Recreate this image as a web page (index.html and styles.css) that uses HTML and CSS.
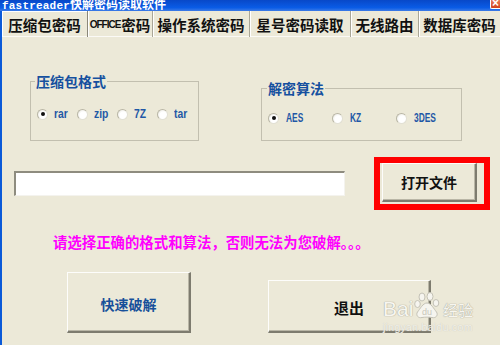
FILE: index.html
```html
<!DOCTYPE html>
<html lang="zh-CN">
<head>
<meta charset="utf-8">
<title>fastreader快解密码读取软件</title>
<link rel="stylesheet" href="styles.css">
</head>
<body>
<div class="window">
  <div class="titlebar">
    <span class="title"><span class="latin-title">fastreader</span>快解密码读取软件</span>
    <span class="close">×</span>
  </div>
  <div class="tabs">
    <div class="tab t1 active">压缩包密码</div>
    <div class="tab t2"><span class="office">OFFICE</span>密码</div>
    <div class="tab t3">操作系统密码</div>
    <div class="tab t4">星号密码读取</div>
    <div class="tab t5">无线路由</div>
    <div class="tab t6">数据库密码</div>
  </div>
  <div class="panel">
    <div class="groups">
      <fieldset class="group g1">
        <legend>压缩包格式</legend>
        <div class="radios">
          <label class="radio"><span class="circle checked"></span><span class="lbl">rar</span></label>
          <label class="radio"><span class="circle"></span><span class="lbl">zip</span></label>
          <label class="radio"><span class="circle"></span><span class="lbl">7Z</span></label>
          <label class="radio"><span class="circle"></span><span class="lbl">tar</span></label>
        </div>
      </fieldset>
      <fieldset class="group g2">
        <legend>解密算法</legend>
        <div class="radios">
          <label class="radio"><span class="circle checked"></span><span class="lbl">AES</span></label>
          <label class="radio"><span class="circle"></span><span class="lbl">KZ</span></label>
          <label class="radio"><span class="circle"></span><span class="lbl">3DES</span></label>
        </div>
      </fieldset>
    </div>
    <div class="filerow">
      <div class="filebox"></div>
      <div class="highlight"><button class="btn open">打开文件</button></div>
    </div>
    <p class="msg">请选择正确的格式和算法，否则无法为您破解。。。</p>
    <div class="actions">
      <button class="btn crack">快速破解</button>
      <button class="btn exit">退出</button>
    </div>
  </div>
  <div class="watermark">
    <div class="wm-line">
      <span class="wm-bai">Bai</span>
      <svg class="paw" width="26" height="27" viewBox="0 0 26 27">
        <g fill="#f6f5ef" stroke="#c4c2b6" stroke-width="1">
          <ellipse cx="8" cy="5" rx="3" ry="4"/>
          <ellipse cx="16" cy="4.5" rx="3" ry="4"/>
          <ellipse cx="3.5" cy="12" rx="2.8" ry="3.5"/>
          <ellipse cx="22" cy="11" rx="2.8" ry="3.5"/>
          <path d="M13 11 C9 11 6 17 3.5 20 C1.5 23 4 26.5 8 25.5 C10.5 25 15.5 25 18 25.5 C22 26.5 24.5 23 22.5 20 C20 17 17 11 13 11 Z"/>
        </g>
        <text x="13" y="23" text-anchor="middle" class="paw-du">du</text>
      </svg>
      <span class="wm-jy">经验</span>
    </div>
    <div class="wm-url">jingyan.baidu.com</div>
  </div>
</div>
</body>
</html>
```

FILE: styles.css
```css
* { box-sizing: border-box; }
html, body {
  margin: 0;
  padding: 0;
  width: 500px;
  height: 345px;
  overflow: hidden;
  background: #ece9d8;
}
body {
  font-family: "Noto Sans CJK SC", "Liberation Sans", sans-serif;
}
.window {
  position: relative;
  width: 500px;
  height: 345px;
  border-left: 2px solid #0b5ad8;
  background: #ece9d8;
}
.titlebar {
  display: flex;
  align-items: flex-start;
  height: 11px;
  margin-left: -2px;
  background: linear-gradient(#0848c8, #0a5ce6 70%, #3d7be6);
  overflow: hidden;
}
.title {
  display: block;
  margin-top: -3px;
  padding-left: 2px;
  color: #fff;
  font-weight: 700;
  font-size: 12px;
  line-height: 13px;
  white-space: nowrap;
}
.latin-title {
  font-family: "Liberation Mono", "DejaVu Sans Mono", monospace;
  font-size: 11px;
  letter-spacing: 0.2px;
}
.close {
  margin-left: auto;
  width: 10px;
  height: 9px;
  background: linear-gradient(#e97b5a, #d2401c);
  border: 1px solid #fff;
  border-right: 0;
  border-top: 0;
  border-radius: 0 0 0 2px;
  color: #fff;
  font-family: "Liberation Sans", sans-serif;
  font-weight: 700;
  font-size: 12px;
  line-height: 7px;
  padding-left: 1px;
  overflow: hidden;
}
.tabs {
  display: flex;
  height: 26px;
  border-bottom: 1px solid #fbfaf6;
}
.tab {
  display: flex;
  align-items: center;
  justify-content: center;
  height: 26px;
  font-size: 14.5px;
  font-weight: 700;
  color: #111;
  white-space: nowrap;
  border-right: 1px solid #a9a697;
  box-shadow: inset 1px 0 0 #fff;
  padding-top: 1px;
}
.tab.active {
  box-shadow: inset 1px 1px 0 #fff;
  border-right: 1px solid #8a8779;
}
.t1 { width: 86px; box-shadow: none; }
.t2 { width: 65px; }
.t3 { width: 97px; }
.t4 { width: 101px; }
.t5 { width: 68px; }
.t6 { width: 81px; border-right: 0; }
.office {
  font-family: "Liberation Sans", sans-serif;
  font-size: 10px;
  letter-spacing: -1px;
  margin-right: 1px;
}
.panel {
  display: flex;
  flex-direction: column;
}
.groups {
  display: flex;
  align-items: flex-end;
  gap: 62px;
  margin: 37px 0 0 28px;
}
.group {
  margin: 0;
  padding: 0;
  min-width: 0;
  border: 1px solid #c2bfaf;
  border-radius: 0;
}
.group legend {
  padding: 0 1px;
  font-size: 14px;
  line-height: 14px;
  font-weight: 700;
  color: #15509f;
}
.g1 { width: 169px; padding-bottom: 19px; }
.g1 legend { margin-left: 4px; }
.g1 .radios { margin-top: 19px; padding-left: 6px; }
.g1 .radio { width: 40px; }
.g1 .lbl { transform: scaleX(0.86); }
.g2 { width: 201px; padding-bottom: 15px; }
.g2 legend { margin-left: 5px; }
.g2 .radios { margin-top: 16px; padding-left: 6px; }
.g2 .radio { width: 64px; gap: 7px; }
.g2 .lbl { transform: scaleX(0.7); }
.radios {
  display: flex;
  height: 14px;
  align-items: center;
}
.radio {
  display: flex;
  align-items: center;
  gap: 6px;
}
.circle {
  position: relative;
  flex: none;
  width: 11px;
  height: 11px;
  border-radius: 50%;
  border: 1px solid #b9b6a6;
  border-right-color: #e2e0d4;
  border-bottom-color: #e2e0d4;
  background: radial-gradient(circle at 60% 60%, #ffffff 45%, #e4e2d8 100%);
}
.circle.checked::after {
  content: "";
  position: absolute;
  left: 2.5px;
  top: 2.5px;
  width: 4px;
  height: 4px;
  border-radius: 50%;
  background: #111;
}
.lbl {
  display: inline-block;
  transform-origin: left center;
  font-family: "Liberation Sans", sans-serif;
  font-size: 12px;
  font-weight: 700;
  color: #1f58a6;
  line-height: 14px;
}
.filerow {
  display: flex;
  align-items: center;
  margin: 16px 0 0 12px;
  gap: 29px;
}
.filebox {
  width: 331px;
  height: 25px;
  background: #fff;
  border-style: solid;
  border-width: 2px 1px 1px 2px;
  border-color: #8e8c7f #f4f3ee #f4f3ee #8e8c7f;
}
.highlight {
  display: flex;
  align-items: flex-start;
  width: 116px;
  height: 53px;
  border: 6px solid #ff0000;
  padding-left: 2px;
}
.btn {
  display: flex;
  align-items: center;
  justify-content: center;
  margin: 0;
  padding: 0;
  background: #ece9d8;
  font-family: "Noto Sans CJK SC", sans-serif;
  font-weight: 700;
  border-style: solid;
  border-width: 1px 2px 2px 1px;
  border-color: #fdfdfb #7d7b6e #7d7b6e #fdfdfb;
  box-shadow: inset -1px -1px 0 #b9b6a6;
}
.open {
  width: 95px;
  height: 39px;
  font-size: 14px;
  color: #111;
}
.msg {
  margin: 23px 0 0 51px;
  font-size: 14.4px;
  line-height: 18px;
  font-weight: 700;
  color: #ff00ff;
  white-space: nowrap;
}
.actions {
  display: flex;
  align-items: flex-end;
  gap: 77px;
  margin: 21px 0 0 65px;
}
.crack {
  width: 124px;
  height: 61px;
  font-size: 14px;
  color: #17509a;
  padding-top: 4px;
}
.exit {
  width: 163px;
  height: 53px;
  font-size: 15px;
  color: #111;
  padding-top: 2px;
}
.watermark {
  position: absolute;
  left: 381px;
  top: 290px;
  color: #f7f6f0;
  pointer-events: none;
}
.wm-line {
  display: flex;
  align-items: flex-end;
  height: 29px;
}
.wm-bai {
  font-family: "Liberation Sans", sans-serif;
  font-size: 21px;
  line-height: 21px;
  text-shadow: 0 0 1px #a9a799, 0 0 1px #a9a799;
  margin-right: 1px;
}
.paw { display: block; }
.paw-du {
  font-family: "Liberation Sans", sans-serif;
  font-size: 9px;
  fill: #c9c7bb;
}
.wm-jy {
  font-size: 15px;
  line-height: 18px;
  margin-left: 3px;
  text-shadow: 0 0 1px #a9a799, 0 0 1px #a9a799;
}
.wm-url {
  margin-top: 3px;
  font-family: "Liberation Sans", sans-serif;
  font-size: 10.5px;
  line-height: 11px;
  letter-spacing: 0.3px;
  color: #f2f1ea;
  text-shadow: 0 0 1px #bdbbaf;
}
```
